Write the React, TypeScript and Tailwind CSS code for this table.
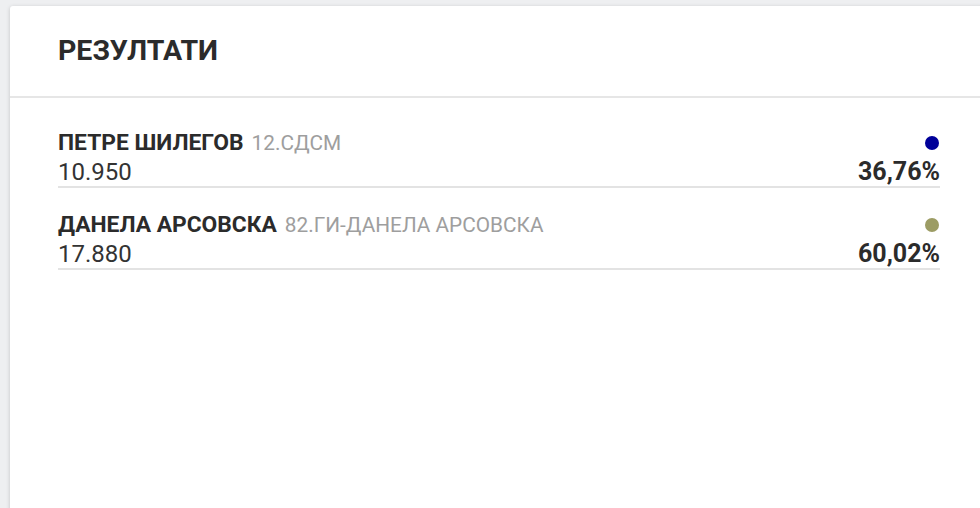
const rows = [
  { name: "ПЕТРЕ ШИЛЕГОВ", party: "12.СДСМ", votes: "10.950", pct: "36,76%", color: "#000099" },
  { name: "ДАНЕЛА АРСОВСКА", party: "82.ГИ-ДАНЕЛА АРСОВСКА", votes: "17.880", pct: "60,02%", color: "#9c9c64" },
];

export default function App() {
  return (
    <div className="h-[508px] w-[980px] overflow-hidden bg-[#eeeff1] pl-[10px] pt-[6px] font-['Roboto',sans-serif]">
      <div className="h-[560px] w-[990px] rounded-[3px] bg-white shadow-[0_1px_4px_rgba(0,0,0,0.18)]">
        <div className="flex h-[92px] items-center border-b-2 border-[#e6e6e6] pl-[48px]">
          <h1 className="text-[28.5px] font-bold text-[#2b2b2b]">РЕЗУЛТАТИ</h1>
        </div>
        <div className="pl-[48px] pr-[60px] pt-[30px]">
          {rows.map((r) => (
            <div key={r.name} className="mb-[22px] border-b-2 border-[#e3e3e3]">
              <div className="flex h-[30px] items-center justify-between">
                <div className="flex items-baseline whitespace-nowrap">
                  <span className="text-[22.8px] font-bold text-[#2b2b2b]">{r.name}</span>
                  <span className="ml-[8px] text-[20.8px] text-[#9e9e9e]">{r.party}</span>
                </div>
                <span className="mr-px h-[14px] w-[14px] rounded-full" style={{ background: r.color }} />
              </div>
              <div className="flex h-[28px] items-center justify-between">
                <span className="text-[24px] text-[#333]">{r.votes}</span>
                <span className="text-[25px] font-bold text-[#2b2b2b]">{r.pct}</span>
              </div>
            </div>
          ))}
        </div>
      </div>
    </div>
  );
}
